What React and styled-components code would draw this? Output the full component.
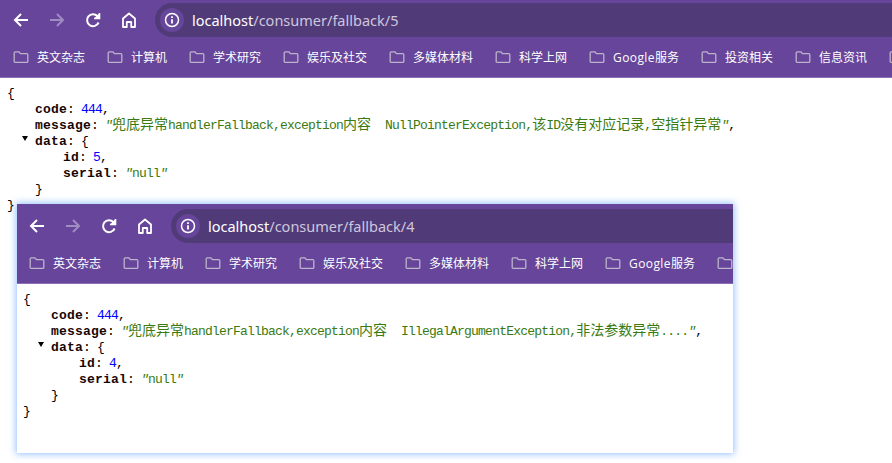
import React from 'react';
import styled, { createGlobalStyle } from 'styled-components';

const Global = createGlobalStyle`
  html, body { margin: 0; padding: 0; background: #fff; }
  body { width: 892px; height: 463px; overflow: hidden; font-family: "Noto Sans", "Noto Sans CJK SC", sans-serif; }
`;

const Page = styled.div`
  position: relative;
  width: 892px;
  height: 463px;
  overflow: hidden;
  background: #fff;
`;

const Window = styled.section`
  display: flex;
  flex-direction: column;
  background: #fff;
  overflow: hidden;
  height: 100%;
`;

const FloatingWindow = styled.div`
  position: absolute;
  left: 17px;
  top: 204px;
  width: 716px;
  height: 249px;
  box-shadow: 0 0 7px 1px rgba(110, 170, 255, 0.75);
`;

const Chrome = styled.header`
  background: #66459a;
  border-bottom: 1px solid #8a6fb5;
  flex: none;
`;

const Toolbar = styled.div`
  display: flex;
  align-items: center;
  padding: ${p => p.$top}px 0 0 ${p => p.$left}px;
`;

const NavButton = styled.span`
  width: 36px;
  height: 34px;
  display: flex;
  align-items: center;
  justify-content: center;
  color: ${p => (p.$dim ? '#a08cc2' : '#ffffff')};
`;

const Omnibox = styled.div`
  flex: 1;
  height: 34px;
  margin-left: 8px;
  display: flex;
  align-items: center;
  gap: 8px;
  padding-left: 5px;
  border-radius: 17px 0 0 17px;
  background: #503b78;
  font-size: 14.5px;
  color: #cfc6de;
`;

const InfoChip = styled.span`
  width: 24px;
  height: 24px;
  border-radius: 50%;
  background: #66459a;
  color: #fff;
  display: flex;
  align-items: center;
  justify-content: center;
`;

const Host = styled.span`
  color: #fff;
`;

const Bookmarks = styled.nav`
  height: 40px;
  display: flex;
  align-items: center;
  gap: 22px;
  padding-left: ${p => p.$left}px;
  white-space: nowrap;
  overflow: hidden;
`;

const Bookmark = styled.span`
  display: flex;
  align-items: center;
  gap: 8px;
  flex: none;
  font-family: "Open Sans", "Noto Sans CJK SC", sans-serif;
  font-size: 12px;
  color: #fff;
`;

const Latin = styled.span`
  letter-spacing: 0.4px;
`;

const FolderGlyph = styled.svg`
  width: 16px;
  height: 16px;
  flex: none;
  color: #bdb3cc;
`;

const Json = styled.main`
  flex: 1;
  padding: ${p => p.$top}px 0 0 ${p => p.$left}px;
  font-family: "Liberation Mono", "Noto Sans CJK SC", monospace;
  font-size: 13px;
  letter-spacing: -0.8px;
  line-height: 16px;
  color: #000;
  white-space: pre;
`;

const Line = styled.div`
  height: 16px;
`;

const Block = styled.div`
  padding-left: 28px;
`;

const Key = styled.span`
  position: relative;
  font-weight: 700;
  letter-spacing: 0.2px;
  color: #1a0505;
`;

const Toggle = styled.span`
  position: absolute;
  left: -13px;
  top: 2px;
  width: 0;
  height: 0;
  border-left: 3px solid transparent;
  border-right: 3px solid transparent;
  border-top: 5px solid #000;
`;

const Num = styled.span`
  color: #0000ff;
`;

const Str = styled.span`
  color: #3a7a10;
`;

const Quote = styled.span`
  font-style: italic;
`;

const Han = styled.span`
  font-family: "Noto Sans CJK SC", sans-serif;
  font-size: 14px;
  line-height: 0;
  letter-spacing: 0;
`;

const Back = () => (
  <svg width="18" height="18" viewBox="0 0 18 18" fill="none" stroke="currentColor" strokeWidth="2">
    <path d="M16 9H3M9 3 3 9l6 6" />
  </svg>
);
const Forward = () => (
  <svg width="18" height="18" viewBox="0 0 18 18" fill="none" stroke="currentColor" strokeWidth="2">
    <path d="M2 9h13M9 3l6 6-6 6" />
  </svg>
);
const Reload = () => (
  <svg width="18" height="18" viewBox="0 0 18 18" fill="none" stroke="currentColor" strokeWidth="2">
    <path d="M14.6 11.5A6 6 0 1 1 13.4 5L15 6.6" />
    <path d="M15.5 2v5.500h-5.500" strokeWidth="1.600" fill="currentColor" />
  </svg>
);
const Home = () => (
  <svg width="18" height="18" viewBox="0 0 18 18" fill="none" stroke="currentColor" strokeWidth="1.800">
    <path d="M3 16V7.500L9 2.500l6 5V16h-3.800v-5H6.800v5z" strokeLinejoin="round" />
  </svg>
);
const Info = () => (
  <svg width="16" height="16" viewBox="0 0 16 16" fill="none" stroke="currentColor" strokeWidth="1.500">
    <circle cx="8" cy="8" r="6.500" />
    <path d="M8 7.200V11.500" strokeWidth="1.800" />
    <path d="M8 4.300v1.600" strokeWidth="1.800" />
  </svg>
);
const Folder = () => (
  <FolderGlyph viewBox="0 0 16 16" fill="none" stroke="currentColor" strokeWidth="1.300">
    <path d="M1.200 3.800c0-.6.4-1 1-1h3.600l1.600 1.800h6.400c.6 0 1 .4 1 1v6.800c0 .6-.4 1-1 1H2.200c-.6 0-1-.4-1-1z" strokeLinejoin="round" />
  </FolderGlyph>
);

const MARKS = [
  '英文杂志',
  '计算机',
  '学术研究',
  '娱乐及社交',
  '多媒体材料',
  '科学上网',
  <span><Latin>Google</Latin>服务</span>,
  '投资相关',
  '信息资讯',
];

const Browser = ({ id, top, left, bodyTop, bodyLeft, marks, message }) => (
  <Window>
    <Chrome>
      <Toolbar $top={top} $left={left}>
        <NavButton><Back /></NavButton>
        <NavButton $dim><Forward /></NavButton>
        <NavButton><Reload /></NavButton>
        <NavButton><Home /></NavButton>
        <Omnibox>
          <InfoChip><Info /></InfoChip>
          <span><Host>localhost</Host>/consumer/fallback/{id}</span>
        </Omnibox>
      </Toolbar>
      <Bookmarks $left={left + 10}>
        {MARKS.slice(0, marks).map((m, i) => (
          <Bookmark key={i}><Folder />{m}</Bookmark>
        ))}
        <Bookmark><Folder /></Bookmark>
      </Bookmarks>
    </Chrome>
    <Json $top={bodyTop} $left={bodyLeft}>
      <Line>{'{'}</Line>
      <Block>
        <Line><Key>code</Key>: <Num>444</Num>,</Line>
        <Line><Key>message</Key>: <Str><Quote>"</Quote>{message}<Quote>"</Quote></Str>,</Line>
        <Line><Key><Toggle />data</Key>: {'{'}</Line>
        <Block>
          <Line><Key>id</Key>: <Num>{id}</Num>,</Line>
          <Line><Key>serial</Key>: <Str><Quote>"</Quote>null<Quote>"</Quote></Str></Line>
        </Block>
        <Line>{'}'}</Line>
      </Block>
      <Line>{'}'}</Line>
    </Json>
  </Window>
);

export default function App() {
  return (
    <Page>
      <Global />
      <Browser
        id={5}
        top={3}
        left={3}
        bodyTop={8}
        bodyLeft={7}
        marks={9}
        message={<><Han>兜底异常</Han>handlerFallback,exception<Han>内容</Han>{'  '}NullPointerException,<Han>该</Han>ID<Han>没有对应记录</Han>,<Han>空指针异常</Han></>}
      />
      <FloatingWindow>
        <Browser
          id={4}
          top={5}
          left={2}
          bodyTop={8}
          bodyLeft={6}
          marks={7}
          message={<><Han>兜底异常</Han>handlerFallback,exception<Han>内容</Han>{'  '}IllegalArgumentException,<Han>非法参数异常</Han>....</>}
        />
      </FloatingWindow>
    </Page>
  );
}
